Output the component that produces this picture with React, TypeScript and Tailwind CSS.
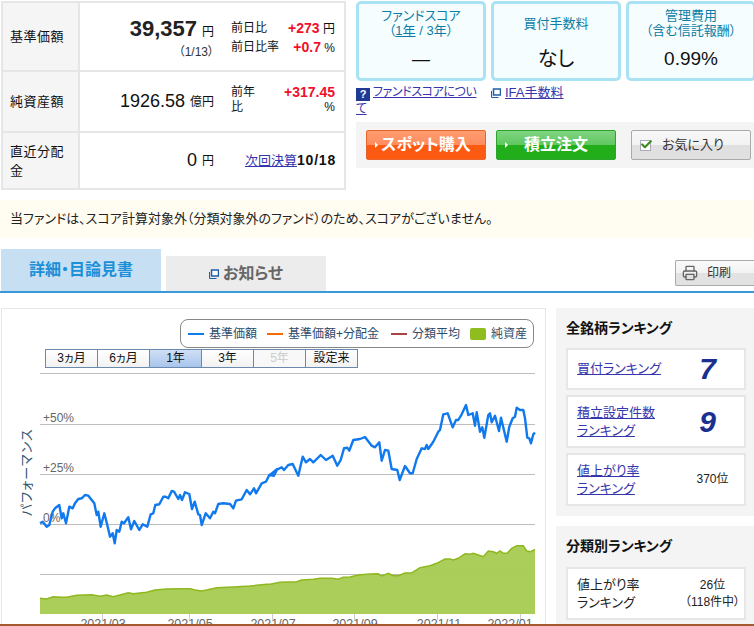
import { Check, Printer } from "lucide-react";

const FONT = "[font-family:'Liberation_Sans','Noto_Sans_CJK_JP',sans-serif] [font-feature-settings:'palt']";
const LINK = "text-[#3535ad] underline";

// traced from the reference, in crop pixels (3x, left crop at x=0 and right crop at x=270)
const lineLeft = [
  [120, 655], [128, 650], [140, 665], [148, 660], [158, 620], [165, 610], [178, 600], [185, 640], [190, 625], [198, 655],
  [208, 605], [218, 610], [225, 595], [235, 582], [245, 580], [255, 570], [265, 572], [283, 595], [290, 630], [295, 620],
  [302, 665], [313, 625], [322, 660], [330, 695], [338, 685], [344, 715], [350, 675], [358, 680], [365, 650], [372, 655],
  [385, 637], [393, 673], [403, 648], [418, 675], [428, 658], [442, 665], [452, 628], [460, 625], [466, 600], [478, 598],
  [490, 575], [497, 575], [505, 580], [515, 558], [522, 560], [535, 582], [540, 570], [546, 585], [555, 562], [568, 567],
  [576, 612], [584, 590], [595, 628], [600, 630], [605, 660], [617, 625], [630, 640], [640, 620], [645, 625], [655, 597],
  [670, 595], [690, 597], [700, 610], [708, 587], [725, 583], [740, 555], [750, 568], [762, 550], [768, 565], [785, 535],
  [798, 530], [808, 510], [822, 512], [832, 492],
];
const lineRight = [
  [0, 510], [12, 512], [18, 495], [35, 487], [42, 495], [55, 480], [68, 477], [85, 512], [98, 455], [108, 472],
  [120, 462], [130, 472], [152, 450], [168, 465], [188, 452], [202, 482], [212, 465], [222, 430], [232, 428], [238, 437],
  [250, 405], [270, 402], [285, 396], [305, 422], [315, 427], [328, 412], [335, 467], [345, 435], [355, 437], [365, 492],
  [382, 495], [389, 525], [405, 483], [420, 505], [428, 505], [440, 462], [455, 430], [465, 432], [470, 420], [475, 432],
  [490, 410], [505, 380], [510, 375], [520, 328], [533, 325], [548, 367], [558, 345], [565, 345], [575, 328], [588, 300],
  [595, 330], [608, 325], [615, 362], [620, 322], [630, 380], [637, 367], [643, 398], [655, 330], [660, 325], [665, 352],
  [675, 332], [687, 378], [693, 338], [710, 410], [718, 365], [728, 340], [735, 335], [740, 308], [750, 315], [760, 315],
  [765, 340], [772, 398], [778, 400], [783, 415], [790, 388], [795, 383],
];
const areaLeft = [
  [120, 880], [140, 882], [160, 875], [185, 877], [200, 877], [230, 871], [275, 869], [300, 874], [320, 870], [340, 875],
  [360, 870], [385, 863], [400, 866], [440, 862], [465, 855], [500, 852], [545, 851], [570, 851], [585, 855], [605, 858],
  [620, 855], [650, 848], [700, 846], [750, 843], [800, 838],
];
const areaRight = [
  [0, 838], [30, 832], [80, 830], [95, 825], [130, 823], [150, 820], [185, 820], [205, 823], [220, 817], [240, 816],
  [265, 810], [300, 807], [325, 806], [335, 813], [355, 805], [370, 812], [385, 812], [405, 804], [425, 804], [450, 788],
  [480, 782], [500, 775], [525, 762], [540, 762], [550, 765], [565, 760], [585, 746], [600, 748], [610, 745], [625, 750],
  [640, 755], [655, 738], [670, 740], [680, 745], [690, 738], [700, 745], [712, 745], [725, 730], [740, 722], [760, 722],
  [770, 738], [782, 740], [795, 733],
];

function toPoints(left: number[][], right: number[][]) {
  const a = left.map(([x, y]) => `${(x / 3).toFixed(1)},${(305 + y / 3).toFixed(1)}`);
  const b = right.map(([x, y]) => `${(270 + x / 3).toFixed(1)},${(305 + y / 3).toFixed(1)}`);
  return [...a, ...b].join(" ");
}

const linePoints = toPoints(lineLeft, lineRight);
const areaPoints = toPoints(areaLeft, areaRight);

function WindowIcon() {
  return (
    <svg width="10" height="10" viewBox="0 0 10 10" className="shrink-0">
      <path d="M0.5 3v6.5h7" fill="none" stroke="#1c5fa8" strokeWidth="1" />
      <rect x="2.5" y="1" width="7" height="6" fill="#fff" stroke="#1c5fa8" strokeWidth="1.5" />
    </svg>
  );
}

function SummaryTable() {
  return (
    <div className="ml-px mt-px h-[189px] w-[345px] shrink-0 border-2 border-[#e6e6e6] text-[#111]">
      <div className="flex h-[69px] border-b-2 border-[#e6e6e6]">
        <div className="flex w-[77px] shrink-0 items-center border-r-2 border-[#e6e6e6] bg-[#f5f5f5] pl-[7px] text-[13px] tracking-[0.5px]">基準価額</div>
        <div className="flex w-[134px] shrink-0 flex-col items-end pt-[15px] leading-none">
          <div className="flex items-baseline gap-[5px]">
            <span className="text-[22px] font-bold text-[#222]">39,357</span>
            <span className="text-[12px]">円</span>
          </div>
          <div className="mt-[6px] text-[12px] text-[#333]">（1/13）</div>
        </div>
        <div className="ml-[17px] flex w-[104px] flex-col gap-[2px] pt-[17px] text-[12px] leading-[16px]">
          <div className="flex justify-between">
            <span>前日比</span>
            <span><b className="text-[14px] text-[#f0102c]">+273</b> 円</span>
          </div>
          <div className="flex justify-between">
            <span>前日比率</span>
            <span><b className="text-[14px] text-[#f0102c]">+0.7</b> %</span>
          </div>
        </div>
      </div>
      <div className="flex h-[61px] border-b-2 border-[#e6e6e6]">
        <div className="flex w-[77px] shrink-0 items-center border-r-2 border-[#e6e6e6] bg-[#f5f5f5] pl-[7px] text-[13px] tracking-[0.5px]">純資産額</div>
        <div className="flex w-[134px] shrink-0 items-center justify-end gap-[5px]">
          <span className="text-[18px]">1926.58</span>
          <span className="text-[12px]">億円</span>
        </div>
        <div className="ml-[17px] flex w-[104px] justify-between pt-[13px] text-[12px] leading-[15px]">
          <span className="w-[26px]">前年比</span>
          <div className="flex flex-col items-end">
            <b className="text-[14px] text-[#f0102c]">+317.45</b>
            <span>%</span>
          </div>
        </div>
      </div>
      <div className="flex h-[55px]">
        <div className="flex w-[77px] shrink-0 items-center border-r-2 border-[#e6e6e6] bg-[#f5f5f5] pl-[7px] text-[13px] leading-[19px] tracking-[0.5px]">
          <span>直近分配<br />金</span>
        </div>
        <div className="flex w-[134px] shrink-0 items-center justify-end gap-[5px]">
          <span className="text-[18px]">0</span>
          <span className="text-[12px]">円</span>
        </div>
        <div className="flex w-[122px] items-center justify-end text-[13px]">
          <span className={LINK}>次回決算</span>
          <b className="text-[14px] tracking-[0.8px]">10/18</b>
        </div>
      </div>
    </div>
  );
}

function ScoreCard({ title, value, valueClass }: { title: React.ReactNode; value: string; valueClass: string }) {
  return (
    <div className="flex h-[80px] w-[130px] flex-col items-center rounded-[5px] border-[3px] border-[#a9e2f3] bg-[#f5fdff]">
      <div className="flex h-[38px] items-center text-center text-[13px] leading-[15px] text-[#0c7ea6]">
        <div>{title}</div>
      </div>
      <div className={`flex h-[34px] items-center text-[#111] ${valueClass}`}>{value}</div>
    </div>
  );
}

function ActionButton({ label, className, mark }: { label: string; className: string; mark: string }) {
  return (
    <div className={`relative flex h-[30px] w-[120px] items-center justify-center rounded-[2px] border text-[16px] font-bold text-white ${className}`}>
      <span className="absolute left-[8px] top-[11px] h-0 w-0 border-y-[3px] border-l-[3px] border-y-transparent" style={{ borderLeftColor: mark }} />
      {label}
    </div>
  );
}

function RightTop() {
  return (
    <div className="ml-[10px] flex-1">
      <div className="mt-px flex gap-[5px]">
        <ScoreCard
          title={<>ファンドスコア<br />（<span className="underline">1年</span> / 3年）</>}
          value="—"
          valueClass="text-[18px]"
        />
        <ScoreCard title="買付手数料" value="なし" valueClass="text-[20px]" />
        <ScoreCard title={<>管理費用<br />（含む信託報酬）</>} value="0.99%" valueClass="text-[19px]" />
      </div>
      <div className="mt-[3px] flex h-[38px] text-[13px] leading-[17px]">
        <div className="w-[135px] text-[12px] tracking-[-0.4px]">
          <span className="mr-[3px] inline-block h-[13px] w-[14px] bg-[#1f3a93] text-center align-[-2px] text-[11px] font-bold leading-[13px] text-white">?</span>
          <span className={LINK}>ファンドスコアについ<br />て</span>
        </div>
        <div className="flex h-[17px] items-center gap-[4px]">
          <WindowIcon />
          <span className={LINK}>IFA手数料</span>
        </div>
      </div>
      <div className="flex h-[46px] items-center gap-[10px] bg-[#f4f4f4] pl-[10px]">
        <ActionButton
          label="スポット購入"
          mark="#fff"
          className="border-[#e8642c] bg-[linear-gradient(#fe9d70_0%,#fe8c5e_50%,#fb5a10_50%,#fb5a10_100%)]"
        />
        <ActionButton
          label="積立注文"
          mark="#fff"
          className="border-[#2aa52a] bg-[linear-gradient(#80d480_0%,#5fc760_50%,#22ad1a_50%,#22ad1a_100%)]"
        />
        <div className="ml-[5px] flex h-[30px] w-[120px] items-center gap-[11px] rounded-[2px] border border-[#aaa] bg-[linear-gradient(#f8f8f8_0%,#f2f2f2_50%,#e0e0e0_50%,#e0e0e0_100%)] pl-[8px] text-[13px] text-[#333]">
          <span className="relative h-[11px] w-[11px] border border-[#aab] bg-white">
            <Check className="absolute -left-[1px] -top-[3px] size-[13px] text-[#3f8a1e]" strokeWidth={4} />
          </span>
          お気に入り
        </div>
      </div>
    </div>
  );
}

function Tabs() {
  return (
    <div className="mt-[11px] flex h-[44px] items-end border-b-2 border-[#3a9ad9] pl-px">
      <div className="flex h-[42px] w-[160px] items-center justify-center bg-[#c7dff3] text-[16px] font-bold text-[#1b8fd8]">詳細・目論見書</div>
      <div className="ml-[5px] flex h-[35px] w-[160px] items-center justify-center gap-[4px] bg-[#ececec] text-[16px] font-bold text-[#666]">
        <WindowIcon />
        お知らせ
      </div>
      <div className="mb-[5px] ml-auto flex h-[26px] w-[79px] items-center gap-[9px] rounded-l-[2px] border border-r-0 border-[#aaa] bg-[linear-gradient(#fafafa_0%,#f2f2f2_50%,#e2e2e2_50%,#e2e2e2_100%)] pl-[6px] text-[12px] text-[#333]">
        <Printer className="size-[16px] text-[#666]" />
        印刷
      </div>
    </div>
  );
}

const RANGES = ["3ヵ月", "6ヵ月", "1年", "3年", "5年", "設定来"];

function Chart() {
  return (
    <div className="ml-px h-[318px] w-[545px] shrink-0 overflow-hidden border border-b-0 border-[#e6e6e6]">
      <div className="flex justify-end pr-[11px] pt-[10px]">
        <div className="flex h-[29px] w-[354px] items-center rounded-[8px] border border-[#888] pl-[7px] text-[12px] text-[#2d4a6a]">
          <span className="mr-[5px] h-[2px] w-[16px] bg-[#0f7cf0]" />
          基準価額
          <span className="ml-[10px] mr-[5px] h-[2px] w-[16px] bg-[#f56a00]" />
          基準価額+分配金
          <span className="ml-[12px] mr-[5px] h-[2px] w-[16px] bg-[#a84444]" />
          分類平均
          <span className="ml-[10px] mr-[5px] h-[12px] w-[16px] rounded-[2px] bg-[#8fbc1f]" />
          純資産
        </div>
      </div>
      <div className="ml-[43px] mt-px flex h-[19px] w-[313px] border border-[#6a8aad] text-[12px] leading-[17px]">
        {RANGES.map((r, i) => (
          <div
            key={r}
            className={
              "flex-1 text-center " +
              (i > 0 ? "border-l border-[#6a8aad] " : "") +
              (r === "1年"
                ? "bg-[linear-gradient(#cfe0f6,#a9c5ec)] text-[#111]"
                : r === "5年"
                  ? "bg-[#f8f8f8] text-[#ccc]"
                  : "bg-[linear-gradient(#fff,#f2f2f2)] text-[#111]")
            }
          >
            {r}
          </div>
        ))}
      </div>
      <svg width="543" height="258" viewBox="2 369 543 258" className="mt-px block">
        {[373, 424, 474, 524, 574].map((y) => (
          <line key={y} x1="40" x2="535" y1={y + 0.5} y2={y + 0.5} stroke="#bdbdbd" strokeWidth="1" />
        ))}
        <text x="43" y="422" fontSize="12" fill="#666">+50%</text>
        <text x="43" y="472" fontSize="12" fill="#666">+25%</text>
        <text x="43" y="522" fontSize="12" fill="#666">0%</text>
        <text transform="translate(31 516) rotate(-90)" fontSize="13" letterSpacing="1" fill="#33566f">パフォーマンス</text>
        <polygon points={`40,614 ${areaPoints} 535,614`} fill="#a8cc55" fillOpacity="0.97" />
        <polyline points={areaPoints} fill="none" stroke="#8fb71f" strokeWidth="1.5" />
        <polyline points={linePoints} fill="none" stroke="#1079ee" strokeWidth="2.4" strokeLinejoin="round" />
        {[102, 189, 272, 354, 437, 520].map((x) => (
          <line key={x} x1={x + 0.5} x2={x + 0.5} y1="614" y2="620" stroke="#ccc" />
        ))}
        <g fontSize="12.5" fill="#666" textAnchor="middle">
          <text x="103" y="628">2021/03</text>
          <text x="190" y="628">2021/05</text>
          <text x="273" y="628">2021/07</text>
          <text x="355" y="628">2021/09</text>
          <text x="439" y="628">2021/11</text>
          <text x="510" y="628">2022/01</text>
        </g>
      </svg>
    </div>
  );
}

function RankRow({ label, height, children, link = true }: { label: React.ReactNode; height: string; children: React.ReactNode; link?: boolean }) {
  return (
    <div className={`flex items-center border-2 border-[#e6e6e6] bg-white pl-[9px] text-[13px] leading-[18px] ${height}`}>
      <div className={`w-[104px] shrink-0 ${link ? LINK : "text-[#222]"}`}>{label}</div>
      <div className="flex-1 text-center text-[12px] leading-[17px] text-[#222]">{children}</div>
    </div>
  );
}

function BigRank({ n }: { n: string }) {
  return <span className="pr-[10px] text-[30px] font-bold italic leading-none text-[#1a2f8f]">{n}</span>;
}

function Sidebar() {
  return (
    <div className="ml-[10px] flex-1">
      <div className="h-[208px] bg-[#f4f4f4] pl-[10px] pr-[8px] pt-[10px]">
        <h3 className="text-[14px] font-bold leading-[20px] text-[#111]">全銘柄ランキング</h3>
        <div className="mt-[10px] flex flex-col gap-[5px]">
          <RankRow label="買付ランキング" height="h-[42px]"><BigRank n="7" /></RankRow>
          <RankRow label={<>積立設定件数<br />ランキング</>} height="h-[53px]"><BigRank n="9" /></RankRow>
          <RankRow label={<>値上がり率<br />ランキング</>} height="h-[53px]">370位</RankRow>
        </div>
      </div>
      <div className="mt-[10px] h-[100px] bg-[#f4f4f4] pl-[10px] pr-[8px] pt-[10px]">
        <h3 className="text-[14px] font-bold leading-[20px] text-[#111]">分類別ランキング</h3>
        <div className="mt-[11px]">
          <RankRow label={<>値上がり率<br />ランキング</>} height="h-[53px]" link={false}>26位<br />（118件中）</RankRow>
        </div>
      </div>
    </div>
  );
}

export default function App() {
  return (
    <div className={`relative h-[626px] w-[754px] overflow-hidden bg-white ${FONT}`}>
      <div className="flex">
        <SummaryTable />
        <RightTop />
      </div>
      <div className="mt-[10px] flex h-[38px] items-center bg-[#fffdf2] pl-[10px] text-[13px] text-[#222]">
        当ファンドは、スコア計算対象外（分類対象外のファンド）のため、スコアがございません。
      </div>
      <Tabs />
      <div className="mt-[15px] flex">
        <Chart />
        <Sidebar />
      </div>
      <div className="absolute bottom-0 left-0 h-[2px] w-full bg-[#a5592f]" />
    </div>
  );
}
